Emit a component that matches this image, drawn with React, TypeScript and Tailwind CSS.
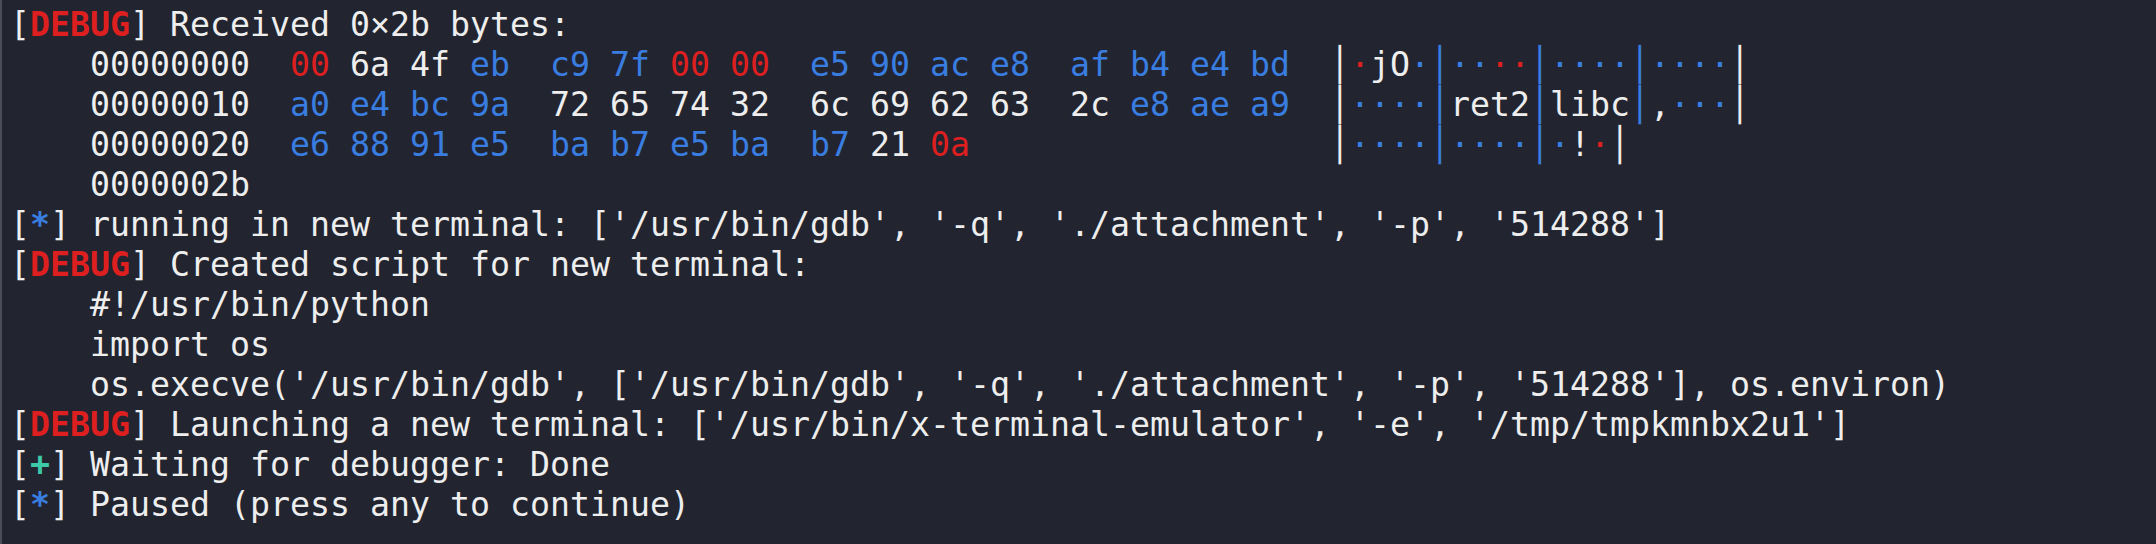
type Seg = { t: string; c?: string };

const WHITE = "text-[#eeeeee]";
const RED = "text-[#dd1f1f]";
const BLUE = "text-[#3a7de0]";
const TEAL = "text-[#3ccaa8]";

const rows: { addr: string; bytes: number[] }[] = [
  {
    addr: "00000000",
    bytes: [0x00, 0x6a, 0x4f, 0xeb, 0xc9, 0x7f, 0x00, 0x00, 0xe5, 0x90, 0xac, 0xe8, 0xaf, 0xb4, 0xe4, 0xbd],
  },
  {
    addr: "00000010",
    bytes: [0xa0, 0xe4, 0xbc, 0x9a, 0x72, 0x65, 0x74, 0x32, 0x6c, 0x69, 0x62, 0x63, 0x2c, 0xe8, 0xae, 0xa9],
  },
  {
    addr: "00000020",
    bytes: [0xe6, 0x88, 0x91, 0xe5, 0xba, 0xb7, 0xe5, 0xba, 0xb7, 0x21, 0x0a],
  },
];

function byteColor(b: number) {
  if (b === 0x00 || b === 0x0a) return RED;
  if (b >= 0x20 && b < 0x7f) return WHITE;
  return BLUE;
}

function hexRow(addr: string, bytes: number[]): Seg[] {
  const segs: Seg[] = [{ t: "    " + addr + "  " }];
  for (let i = 0; i < 16; i++) {
    const sep = i === 0 ? "" : i % 4 === 0 ? "  " : " ";
    if (i < bytes.length) {
      segs.push({ t: sep });
      segs.push({ t: bytes[i].toString(16).padStart(2, "0"), c: byteColor(bytes[i]) });
    } else {
      segs.push({ t: sep + "  " });
    }
  }
  segs.push({ t: "  " });
  for (let i = 0; i < bytes.length; i++) {
    if (i % 4 === 0) segs.push({ t: "│", c: i === 0 ? WHITE : BLUE });
    const b = bytes[i];
    const printable = b >= 0x20 && b < 0x7f;
    segs.push({ t: printable ? String.fromCharCode(b) : "·", c: byteColor(b) });
  }
  segs.push({ t: "│", c: WHITE });
  return segs;
}

function Tag({ label, color }: { label: string; color: string }) {
  return (
    <>
      [<span className={`font-bold ${color}`}>{label}</span>]
    </>
  );
}

function Line({ children }: { children?: React.ReactNode }) {
  return <div className="h-[40px] leading-[40px] whitespace-pre">{children}</div>;
}

export default function App() {
  return (
    <div className="h-screen w-full overflow-hidden border-l-2 border-[#4a4d57] bg-[#222530] pt-[5px] pl-[8px] font-['DejaVu_Sans_Mono',monospace] text-[33.22px] text-[#eeeeee]">
      <Line>
        <Tag label="DEBUG" color={RED} /> Received 0×2b bytes:
      </Line>
      {rows.map((r) => (
        <Line key={r.addr}>
          {hexRow(r.addr, r.bytes).map((s, i) => (
            <span key={i} className={s.c}>
              {s.t}
            </span>
          ))}
        </Line>
      ))}
      <Line>{"    0000002b"}</Line>
      <Line>
        <Tag label="*" color={BLUE} /> running in new terminal: ['/usr/bin/gdb', '-q', './attachment', '-p', '514288']
      </Line>
      <Line>
        <Tag label="DEBUG" color={RED} /> Created script for new terminal:
      </Line>
      <Line>{"    #!/usr/bin/python"}</Line>
      <Line>{"    import os"}</Line>
      <Line>
        {"    os.execve('/usr/bin/gdb', ['/usr/bin/gdb', '-q', './attachment', '-p', '514288'], os.environ)"}
      </Line>
      <Line>
        <Tag label="DEBUG" color={RED} /> Launching a new terminal: ['/usr/bin/x-terminal-emulator', '-e', '/tmp/tmpkmnbx2u1']
      </Line>
      <Line>
        <Tag label="+" color={TEAL} /> Waiting for debugger: Done
      </Line>
      <Line>
        <Tag label="*" color={BLUE} /> Paused (press any to continue)
      </Line>
    </div>
  );
}
